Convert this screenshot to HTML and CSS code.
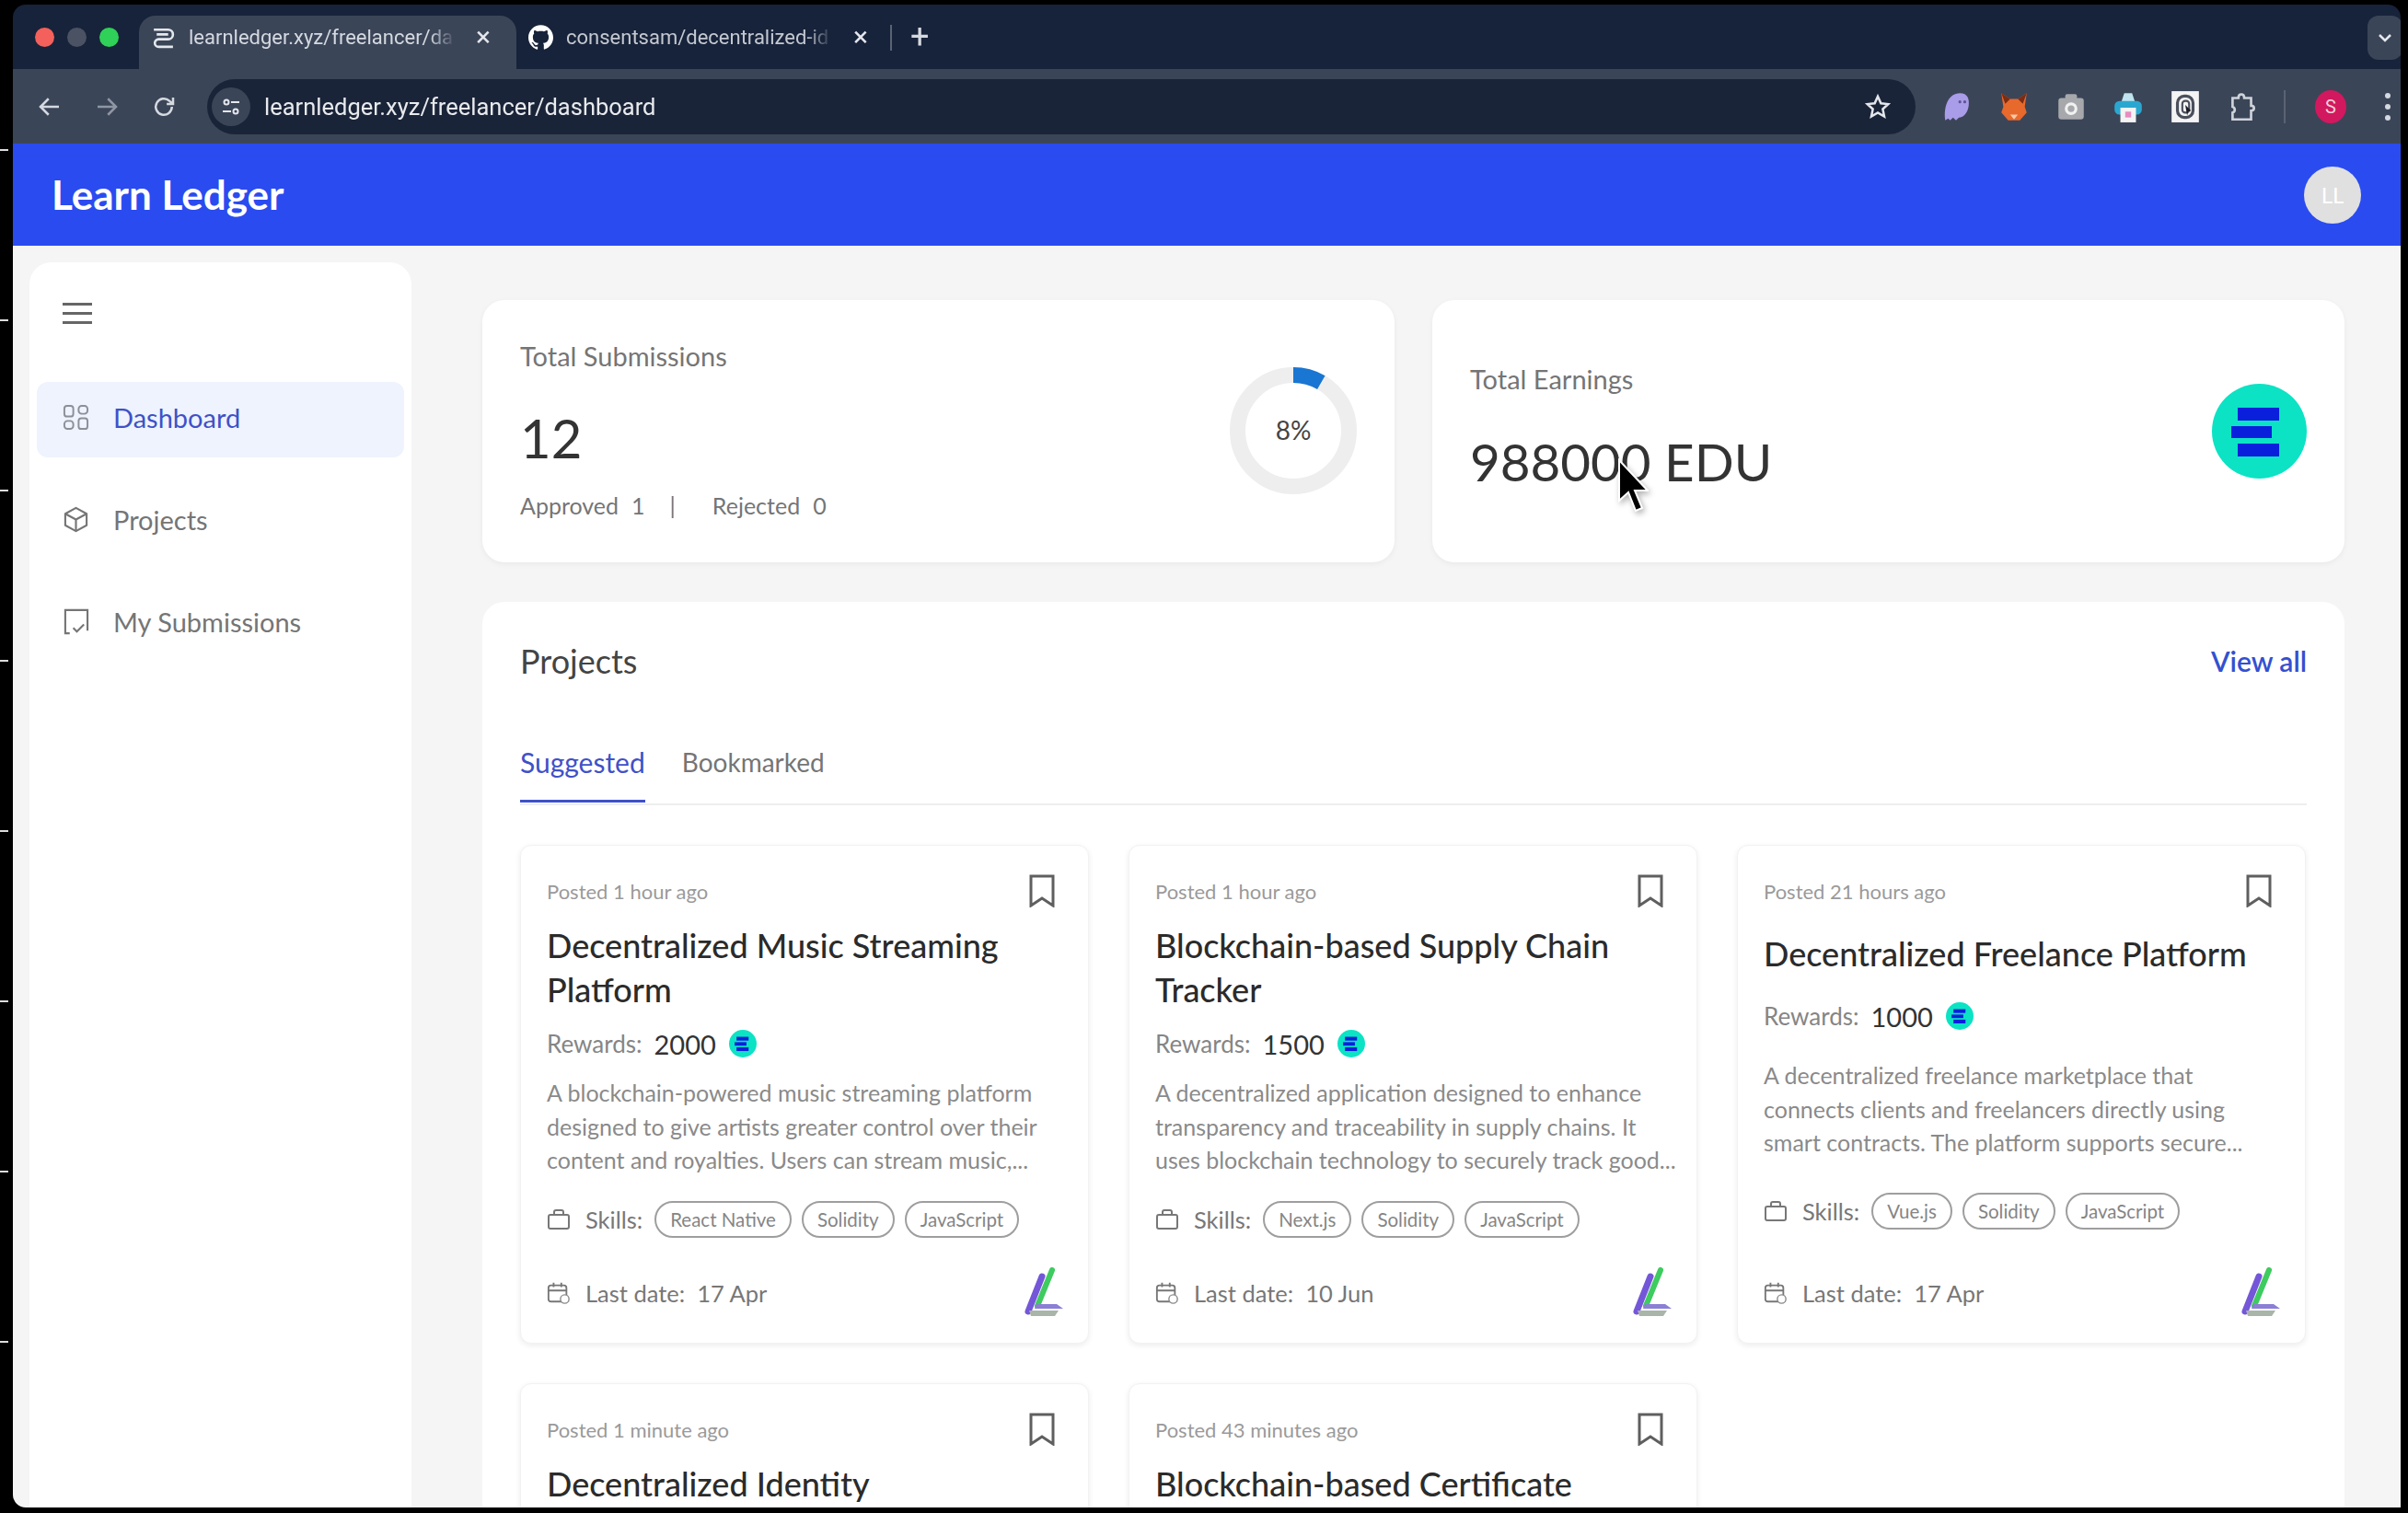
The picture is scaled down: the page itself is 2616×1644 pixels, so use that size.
FILE: index.html
```html
<!DOCTYPE html>
<html lang="en">
<head>
    <meta charset="UTF-8">
    <meta name="viewport" content="width=device-width, initial-scale=1.0">
    <title>Learn Ledger</title>
    <link rel="stylesheet" href="styles.css">
</head>
<body>
    <!-- shared icons -->
    <svg class="icon-defs" aria-hidden="true">
        <symbol id="edu" viewBox="0 0 103 103">
            <circle cx="51.5" cy="51.500" r="51.500" fill="#0be3c4"/>
            <rect x="28" y="26" width="45" height="14" fill="#0a1fdc"/>
            <rect x="21" y="46" width="44" height="13" fill="#0a1fdc"/>
            <rect x="28" y="65" width="45" height="14" fill="#0a1fdc"/>
        </symbol>
        <symbol id="bookmark" viewBox="0 0 30 36">
            <path d="M3 2h24v32l-12-8-12 8z" fill="none" stroke="#5f5f5f" stroke-width="3"/>
        </symbol>
        <symbol id="bag" viewBox="0 0 26 26">
            <rect x="2" y="8" width="22" height="15" rx="2" fill="none" stroke="#777" stroke-width="2"/>
            <path d="M8 8V5a2 2 0 0 1 2-2h6a2 2 0 0 1 2 2v3" fill="none" stroke="#777" stroke-width="2"/>
        </symbol>
        <symbol id="calendar" viewBox="0 0 28 28">
            <rect x="2" y="5" width="21" height="19" rx="3" fill="none" stroke="#777" stroke-width="2"/>
            <path d="M2 11h21M8 2v5M17 2v5" fill="none" stroke="#777" stroke-width="2"/>
            <circle cx="21" cy="21" r="5" fill="#fff" stroke="#888" stroke-width="1.500"/>
        </symbol>
        <symbol id="ll-logo" viewBox="0 0 46 56">
            <path d="M20 10 5 48" stroke="#7457d8" stroke-width="7" stroke-linecap="round" fill="none"/>
            <path d="M31 3 15 42" stroke="#3ecb5f" stroke-width="6" stroke-linecap="round" fill="none"/>
            <path d="M14 40h22l7 5H12z" fill="#8c7fd6"/>
            <path d="M6 47h32l-4 6H8z" fill="#a9b5a8"/>
        </symbol>
    </svg>

    <div class="ticks">
        <i></i><i></i><i></i><i></i><i></i><i></i><i></i><i></i>
    </div>

    <div class="screen">
        <div class="tabstrip">
            <div class="lights"><i class="red"></i><i class="grey"></i><i class="green"></i></div>
            <div class="tab active">
                <svg class="favicon" viewBox="0 0 26 26"><path d="M3 5h15a5 5 0 0 1 0 10H8a4 4 0 0 0 0 8h15M6 10h12" fill="none" stroke="#e4e7ec" stroke-width="2.500"/></svg>
                <span class="tab-title">learnledger.xyz/freelancer/da</span>
                <span class="tab-close">×</span>
            </div>
            <div class="tab">
                <svg class="favicon" viewBox="0 0 24 24"><path fill="#fff" d="M12 .297c-6.630 0-12 5.373-12 12 0 5.303 3.438 9.800 8.205 11.385.600.113.820-.258.820-.577 0-.285-.010-1.040-.015-2.040-3.338.724-4.042-1.610-4.042-1.610C4.422 18.070 3.633 17.700 3.633 17.700c-1.087-.744.084-.729.084-.729 1.205.084 1.838 1.236 1.838 1.236 1.070 1.835 2.809 1.305 3.495.998.108-.776.417-1.305.760-1.605-2.665-.300-5.466-1.332-5.466-5.930 0-1.310.465-2.380 1.235-3.220-.135-.303-.540-1.523.105-3.176 0 0 1.005-.322 3.300 1.230.960-.267 1.980-.399 3-.405 1.020.006 2.040.138 3 .405 2.280-1.552 3.285-1.230 3.285-1.230.645 1.653.240 2.873.120 3.176.765.840 1.230 1.910 1.230 3.220 0 4.610-2.805 5.625-5.475 5.920.420.360.810 1.096.810 2.220 0 1.606-.015 2.896-.015 3.286 0 .315.210.690.825.570C20.565 22.092 24 17.592 24 12.297c0-6.627-5.373-12-12-12"/></svg>
                <span class="tab-title">consentsam/decentralized-id</span>
                <span class="tab-close">×</span>
            </div>
            <span class="tab-sep"></span>
            <span class="tab-new">+</span>
            <span class="tab-menu">
                <svg viewBox="0 0 16 10" width="16" height="10"><path d="M2 2l6 6 6-6" fill="none" stroke="#e4e7ec" stroke-width="2.500"/></svg>
            </span>
        </div>

        <div class="toolbar">
            <svg class="nav-btn" viewBox="0 0 24 24"><path d="M20 12H5M11 5l-7 7 7 7" fill="none" stroke="#d5d9e0" stroke-width="2"/></svg>
            <svg class="nav-btn dim" viewBox="0 0 24 24"><path d="M4 12h15M13 5l7 7-7 7" fill="none" stroke="#8f96a3" stroke-width="2"/></svg>
            <svg class="nav-btn" viewBox="0 0 24 24"><path d="M19 12a7 7 0 1 1-2.200-5.100L20 9.500M20 4v5.500h-5.500" fill="none" stroke="#d5d9e0" stroke-width="2"/></svg>
            <div class="omnibox">
                <span class="site-chip">
                    <svg viewBox="0 0 24 24" width="24" height="24"><g fill="none" stroke="#e4e7ec" stroke-width="2"><circle cx="7" cy="7" r="2.500"/><path d="M12 7h9M3 17h9"/><circle cx="17" cy="17" r="2.500"/></g></svg>
                </span>
                <span class="url">learnledger.xyz/freelancer/dashboard</span>
                <svg class="star" viewBox="0 0 24 24"><path d="M12 3l2.700 6 6.300.700-4.700 4.300 1.300 6.400L12 17.200l-5.600 3.200 1.300-6.400L3 9.700 9.300 9z" fill="none" stroke="#e4e7ec" stroke-width="2"/></svg>
            </div>
            <div class="extensions">
                <svg class="ext" viewBox="0 0 30 34"><path d="M3 31c-2-14 3-28 15-28 8 0 10 6 9 13-1 8-6 12-10 12l-3 3-3-3-3 3-2-2z" fill="#a99ce8"/><circle cx="18" cy="12" r="1.500" fill="#5e5494"/><circle cx="23" cy="12" r="1.500" fill="#5e5494"/></svg>
                <svg class="ext" viewBox="0 0 30 34"><path d="M2 3l9 6h8l9-6-2 14 2 6-7 8H9l-7-8 2-6z" fill="#e8692c"/><path d="M2 3l9 6-5 5zM28 3l-9 6 5 5z" fill="#7c2c12"/><path d="M11 25h8l-4 5z" fill="#f6c9a8"/></svg>
                <svg class="ext" viewBox="0 0 30 34"><rect x="2" y="8" width="26" height="22" rx="3" fill="#a6a8ac"/><rect x="9" y="4" width="12" height="6" rx="2" fill="#a6a8ac"/><circle cx="15" cy="19" r="5" fill="none" stroke="#f1f1f1" stroke-width="3"/></svg>
                <svg class="ext" viewBox="0 0 30 34"><path d="M8 12l3-9h8l3 9z" fill="#bfe3ef"/><rect x="1" y="11" width="28" height="14" rx="5" fill="#2aa7d0"/><rect x="7" y="18" width="16" height="15" fill="#f3f3f3"/><rect x="12" y="22" width="6" height="6" fill="#e88bc0"/></svg>
                <svg class="ext" viewBox="0 0 30 34"><rect x="1" y="1" width="28" height="32" fill="#f4f4f4"/><rect x="7" y="6" width="16" height="22" rx="7" fill="none" stroke="#4a4f5c" stroke-width="3"/><rect x="12" y="11" width="7" height="12" rx="3" fill="none" stroke="#4a4f5c" stroke-width="2"/><path d="M15 15l6 6-3 1-1 4z" fill="#1a1d26"/></svg>
                <svg class="ext" viewBox="0 0 30 34"><path d="M5 8h6c0-5 6-5 6 0h7v8c4 0 4 5 0 5v9H5v-7c3-1 3-5 0-6z" fill="none" stroke="#cfd3da" stroke-width="2.500"/></svg>
                <span class="ext-sep"></span>
                <span class="profile">S</span>
                <span class="dots"><i></i><i></i><i></i></span>
            </div>
        </div>

        <header class="app-header">
            <span class="brand">Learn Ledger</span>
            <span class="user-badge">LL</span>
        </header>

        <div class="app-body">
            <aside class="sidebar">
                <div class="burger"><i></i><i></i><i></i></div>
                <nav class="side-nav">
                    <a class="side-link active">
                        <svg viewBox="0 0 30 30"><g fill="none" stroke="#8a8f98" stroke-width="2"><rect x="2" y="2" width="10" height="12" rx="3"/><rect x="18" y="2" width="10" height="9" rx="3.500"/><rect x="2" y="19" width="10" height="9" rx="3.500"/><rect x="18" y="16" width="10" height="12" rx="3"/></g></svg>
                        Dashboard
                    </a>
                    <a class="side-link">
                        <svg viewBox="0 0 30 30"><g fill="none" stroke="#757575" stroke-width="2.200" stroke-linejoin="round"><path d="M15 2l12 6.500v13L15 28 3 21.500v-13z"/><path d="M3 8.500L15 15l12-6.500M15 15v13"/></g></svg>
                        Projects
                    </a>
                    <a class="side-link">
                        <svg viewBox="0 0 30 30"><path d="M8 28H3V2h25v23M12 22l4 4 8-8" fill="none" stroke="#757575" stroke-width="2.200"/></svg>
                        My Submissions
                    </a>
                </nav>
            </aside>

            <main class="content">
                <section class="stats">
                    <div class="stat-card">
                        <div class="stat-text">
                            <div class="stat-label">Total Submissions</div>
                            <div class="stat-value">12</div>
                            <div class="stat-meta">
                                <span>Approved</span><span class="gap-sm">1</span><span class="gap-md">|</span><span class="gap-lg">Rejected</span><span class="gap-sm">0</span>
                            </div>
                        </div>
                        <div class="donut">
                            <svg viewBox="0 0 138 138">
                                <circle cx="69" cy="69" r="60.500" fill="none" stroke="#eeeeee" stroke-width="17"/>
                                <path d="M69 8.500A60.500 60.500 0 0 1 99.300 16.600" fill="none" stroke="#1976d2" stroke-width="17"/>
                            </svg>
                            <span class="donut-label">8%</span>
                        </div>
                    </div>
                    <div class="stat-card earn">
                        <div class="stat-text">
                            <div class="stat-label">Total Earnings</div>
                            <div class="stat-value wide">988000 EDU</div>
                        </div>
                        <svg class="edu-big"><use href="#edu"/></svg>
                    </div>
                </section>

                <section class="projects">
                    <div class="projects-head">
                        <h2>Projects</h2>
                        <a class="view-all">View all</a>
                    </div>
                    <div class="tabs">
                        <span class="tabs-item on">Suggested</span>
                        <span class="tabs-item">Bookmarked</span>
                    </div>
                    <div class="project-grid">
                        <article class="project-card">
                            <div class="card-top"><span class="posted">Posted 1 hour ago</span><svg class="mark"><use href="#bookmark"/></svg></div>
                            <h3>Decentralized Music Streaming<br>Platform</h3>
                            <div class="rewards"><span>Rewards:</span><b>2000</b><svg class="edu-small"><use href="#edu"/></svg></div>
                            <p class="desc">A blockchain-powered music streaming platform<br>designed to give artists greater control over their<br>content and royalties. Users can stream music,...</p>
                            <div class="skills"><svg class="row-icon"><use href="#bag"/></svg><span class="row-label">Skills:</span><span class="chip">React Native</span><span class="chip">Solidity</span><span class="chip">JavaScript</span></div>
                            <div class="card-foot"><svg class="row-icon"><use href="#calendar"/></svg><span class="row-label">Last date:</span><span class="row-date">17 Apr</span><svg class="ll-logo"><use href="#ll-logo"/></svg></div>
                        </article>
                        <article class="project-card">
                            <div class="card-top"><span class="posted">Posted 1 hour ago</span><svg class="mark"><use href="#bookmark"/></svg></div>
                            <h3>Blockchain-based Supply Chain<br>Tracker</h3>
                            <div class="rewards"><span>Rewards:</span><b>1500</b><svg class="edu-small"><use href="#edu"/></svg></div>
                            <p class="desc">A decentralized application designed to enhance<br>transparency and traceability in supply chains. It<br>uses blockchain technology to securely track good...</p>
                            <div class="skills"><svg class="row-icon"><use href="#bag"/></svg><span class="row-label">Skills:</span><span class="chip">Next.js</span><span class="chip">Solidity</span><span class="chip">JavaScript</span></div>
                            <div class="card-foot"><svg class="row-icon"><use href="#calendar"/></svg><span class="row-label">Last date:</span><span class="row-date">10 Jun</span><svg class="ll-logo"><use href="#ll-logo"/></svg></div>
                        </article>
                        <article class="project-card single">
                            <div class="card-top"><span class="posted">Posted 21 hours ago</span><svg class="mark"><use href="#bookmark"/></svg></div>
                            <h3>Decentralized Freelance Platform</h3>
                            <div class="rewards"><span>Rewards:</span><b>1000</b><svg class="edu-small"><use href="#edu"/></svg></div>
                            <p class="desc">A decentralized freelance marketplace that<br>connects clients and freelancers directly using<br>smart contracts. The platform supports secure...</p>
                            <div class="skills"><svg class="row-icon"><use href="#bag"/></svg><span class="row-label">Skills:</span><span class="chip">Vue.js</span><span class="chip">Solidity</span><span class="chip">JavaScript</span></div>
                            <div class="card-foot"><svg class="row-icon"><use href="#calendar"/></svg><span class="row-label">Last date:</span><span class="row-date">17 Apr</span><svg class="ll-logo"><use href="#ll-logo"/></svg></div>
                        </article>
                        <article class="project-card">
                            <div class="card-top"><span class="posted">Posted 1 minute ago</span><svg class="mark"><use href="#bookmark"/></svg></div>
                            <h3>Decentralized Identity</h3>
                        </article>
                        <article class="project-card">
                            <div class="card-top"><span class="posted">Posted 43 minutes ago</span><svg class="mark"><use href="#bookmark"/></svg></div>
                            <h3>Blockchain-based Certificate</h3>
                        </article>
                    </div>
                </section>
            </main>
        </div>
    </div>

    <!-- mouse pointer caught in the recording -->
    <svg class="pointer" viewBox="0 0 36 60"><path d="M4 2v44l10-9 8 20 7-3-8-19h14z" fill="#000" stroke="#fff" stroke-width="2"/></svg>
</body>
</html>
```

FILE: styles.css
```css
* {
    box-sizing: border-box;
}
body {
    margin: 0;
    width: 2616px;
    height: 1644px;
    background: #000;
    overflow: hidden;
    display: flex;
    font-family: 'Lato', 'Open Sans', sans-serif;
    color: #333;
}
.icon-defs {
    position: absolute;
    width: 0;
    height: 0;
}

/* little marks on the black edge */
.ticks {
    width: 14px;
    flex-shrink: 0;
    padding-top: 162px;
    display: flex;
    flex-direction: column;
    gap: 183px;
}
.ticks i {
    display: block;
    width: 9px;
    height: 2px;
    background: #ddd;
}

.screen {
    width: 2594px;
    height: 1633px;
    margin-top: 5px;
    border-radius: 14px 14px 0 14px;
    overflow: hidden;
    display: flex;
    flex-direction: column;
    filter: blur(0.7px);
}

/* browser chrome */
.tabstrip {
    height: 70px;
    flex-shrink: 0;
    background: #17233a;
    display: flex;
    align-items: flex-end;
    font-family: 'Roboto', 'Liberation Sans', sans-serif;
    position: relative;
}
.lights {
    width: 137px;
    padding: 0 0 24px 24px;
    display: flex;
    gap: 14px;
    flex-shrink: 0;
}
.lights i {
    width: 21px;
    height: 21px;
    border-radius: 50%;
}
.red { background: #f4605b; }
.grey { background: #4a5263; }
.green { background: #2fd158; }
.tab {
    width: 410px;
    height: 58px;
    padding: 0 0 12px 13px;
    border-radius: 18px 18px 0 0;
    display: flex;
    align-items: center;
    color: #c4c8d0;
    font-size: 22px;
    flex-shrink: 0;
}
.tab.active {
    background: #3b4558;
    color: #d5d9e0;
}
.favicon {
    width: 27px;
    height: 27px;
    flex-shrink: 0;
    margin-right: 14px;
}
.tab-title {
    width: 290px;
    white-space: nowrap;
    overflow: hidden;
    -webkit-mask-image: linear-gradient(90deg, #000 90%, transparent);
    mask-image: linear-gradient(90deg, #000 90%, transparent);
}
.tab-close {
    margin-left: 22px;
    font-size: 30px;
    line-height: 1;
    color: #e4e7ec;
}
.tab-sep {
    width: 2px;
    height: 28px;
    background: #5a6373;
    margin: 0 0 20px -4px;
}
.tab-new {
    margin: 0 0 17px 20px;
    font-size: 36px;
    line-height: 1;
    color: #d5d9e0;
}
.tab-menu {
    position: absolute;
    right: -2px;
    top: 12px;
    width: 38px;
    height: 48px;
    border-radius: 12px;
    background: #3b4558;
    display: flex;
    align-items: center;
    justify-content: center;
}
.toolbar {
    height: 81px;
    flex-shrink: 0;
    background: #3b4558;
    display: flex;
    align-items: center;
    padding-left: 25px;
    font-family: 'Roboto', 'Liberation Sans', sans-serif;
}
.nav-btn {
    width: 30px;
    height: 30px;
    margin-right: 32px;
    flex-shrink: 0;
}
.omnibox {
    width: 1856px;
    height: 60px;
    border-radius: 30px;
    background: #1a2438;
    display: flex;
    align-items: center;
    padding: 0 26px 0 5px;
    flex-shrink: 0;
}
.site-chip {
    width: 42px;
    height: 42px;
    border-radius: 50%;
    background: #3b4558;
    display: flex;
    align-items: center;
    justify-content: center;
}
.url {
    margin-left: 15px;
    flex: 1;
    font-size: 25.500px;
    color: #e8eaed;
}
.star {
    width: 30px;
    height: 30px;
}
.extensions {
    display: flex;
    align-items: center;
    margin-left: 29px;
}
.ext {
    width: 32px;
    height: 36px;
    margin-right: 30px;
    flex-shrink: 0;
}
.ext-sep {
    width: 2px;
    height: 36px;
    background: #5a6373;
    margin-left: -1px;
}
.profile {
    width: 34px;
    height: 36px;
    margin-left: 32px;
    border-radius: 50%;
    background: #d2185e;
    color: #f5d0dd;
    font-size: 20px;
    display: flex;
    align-items: center;
    justify-content: center;
    flex-shrink: 0;
}
.dots {
    margin-left: 42px;
    display: flex;
    flex-direction: column;
    gap: 6px;
}
.dots i {
    display: block;
    width: 6px;
    height: 6px;
    border-radius: 50%;
    background: #d5d9e0;
}

/* app */
.app-header {
    height: 111px;
    flex-shrink: 0;
    background: #2a4bf0;
    display: flex;
    align-items: center;
    justify-content: space-between;
    padding: 0 43px 0 42px;
    color: #fff;
}
.brand {
    font-size: 44px;
    font-weight: 700;
    padding-bottom: 2px;
}
.user-badge {
    width: 62px;
    height: 62px;
    border-radius: 50%;
    background: #e0e0e0;
    color: #fff;
    font-size: 24px;
    display: flex;
    align-items: center;
    justify-content: center;
}
.app-body {
    flex: 1;
    min-height: 0;
    background: #f5f5f5;
    display: flex;
    overflow: hidden;
}
.sidebar {
    width: 415px;
    margin: 18px 0 0 18px;
    padding: 0 8px;
    background: #fff;
    border-radius: 24px 24px 0 0;
    flex-shrink: 0;
}
.burger {
    padding: 44px 0 0 28px;
    height: 130px;
    display: flex;
    flex-direction: column;
    gap: 7px;
}
.burger i {
    width: 32px;
    height: 3px;
    background: #666;
}
.side-nav {
    display: flex;
    flex-direction: column;
    gap: 29px;
}
.side-link {
    height: 82px;
    padding: 0 0 5px 28px;
    border-radius: 12px;
    display: flex;
    align-items: center;
    gap: 26px;
    font-size: 29px;
    color: #757575;
}
.side-link svg {
    width: 29px;
    height: 29px;
}
.side-link.active {
    background: #eef3fd;
    color: #3f51c8;
}
.content {
    width: 2023px;
    margin-left: 77px;
    padding-top: 59px;
    flex-shrink: 0;
}
.stats {
    display: flex;
    gap: 41px;
}
.stat-card {
    flex: 1;
    height: 285px;
    padding: 43px 41px 0;
    background: #fff;
    border-radius: 24px;
    box-shadow: 0 2px 6px rgba(0, 0, 0, 0.05);
    display: flex;
    justify-content: space-between;
}
.stat-card.earn {
    padding-top: 68px;
}
.stat-label {
    font-size: 29px;
    line-height: 36px;
    color: #757575;
}
.stat-value {
    margin-top: 36px;
    font-size: 58px;
    line-height: 70px;
    color: #333;
}
.stat-value.wide {
    margin-top: 36px;
    font-size: 56.500px;
}
.stat-meta {
    margin-top: 23px;
    font-size: 25px;
    color: #757575;
    display: flex;
}
.gap-sm { margin-left: 14px; }
.gap-md { margin-left: 27px; }
.gap-lg { margin-left: 40px; }
.donut {
    width: 138px;
    height: 138px;
    margin-top: 30px;
    padding-bottom: 2px;
    position: relative;
    display: flex;
    align-items: center;
    justify-content: center;
}
.donut svg {
    position: absolute;
    inset: 0;
}
.donut-label {
    font-size: 28px;
    color: #444;
}
.edu-big {
    width: 103px;
    height: 103px;
    margin-top: 23px;
}
.projects {
    margin-top: 43px;
    padding: 0 41px;
    background: #fff;
    border-radius: 24px 24px 0 0;
    height: 1200px;
}
.projects-head {
    height: 132px;
    padding-top: 41px;
    display: flex;
    justify-content: space-between;
    align-items: flex-start;
}
.projects-head h2 {
    margin: 0;
    font-size: 36px;
    font-weight: 400;
    line-height: 46px;
    color: #444;
}
.view-all {
    font-size: 30px;
    font-weight: 600;
    line-height: 46px;
    color: #3350d0;
}
.tabs {
    height: 89px;
    border-bottom: 2px solid #eeeeee;
    display: flex;
    gap: 40px;
}
.tabs-item {
    height: 88px;
    line-height: 88px;
    margin-top: -2px;
    font-size: 28px;
    color: #757575;
}
.tabs-item.on {
    font-size: 30px;
    color: #3f51c8;
    border-bottom: 3px solid #3f51c8;
}
.project-grid {
    margin-top: 43px;
    display: grid;
    grid-template-columns: repeat(3, 618px);
    grid-auto-rows: 542px;
    gap: 43px;
}
.project-card {
    padding: 31px 35px 0 28px;
    border-radius: 12px;
    border: 1px solid #f2f2f2;
    box-shadow: 0 2px 6px rgba(0, 0, 0, 0.08);
    background: #fff;
    display: flex;
    flex-direction: column;
}
.card-top {
    height: 36px;
    display: flex;
    justify-content: space-between;
    align-items: center;
}
.posted {
    font-size: 22px;
    color: #9a9a9a;
}
.mark {
    width: 30px;
    height: 36px;
}
.project-card h3 {
    margin: 17px 0 0;
    font-size: 36px;
    font-weight: 500;
    line-height: 48px;
    color: #2b2b2b;
    white-space: nowrap;
}
.project-card.single h3 {
    margin-top: 26px;
}
.rewards {
    margin-top: 15px;
    height: 40px;
    display: flex;
    align-items: center;
    font-size: 26px;
    color: #858585;
}
.single .rewards {
    margin-top: 24px;
}
.rewards b {
    margin-left: 13px;
    font-size: 29px;
    font-weight: 400;
    color: #333;
}
.edu-small {
    width: 30px;
    height: 30px;
    margin-left: 14px;
}
.desc {
    margin: 15px 0 0;
    font-size: 25px;
    line-height: 36.500px;
    color: #8a8a8a;
    white-space: nowrap;
}
.single .desc {
    margin-top: 26px;
}
.skills {
    margin-top: 26px;
    display: flex;
    align-items: center;
}
.single .skills {
    margin-top: 36px;
}
.row-icon {
    width: 26px;
    height: 26px;
    flex-shrink: 0;
    margin-right: 16px;
}
.row-label {
    font-size: 25.500px;
    color: #777;
}
.chip {
    height: 40px;
    padding: 0 15px;
    margin-left: 11px;
    border: 2px solid #9e9e9e;
    border-radius: 20px;
    font-size: 20.500px;
    color: #858585;
    display: flex;
    align-items: center;
}
.row-label + .chip {
    margin-left: 13px;
}
.card-foot {
    margin-top: auto;
    margin-bottom: 26px;
    height: 56px;
    display: flex;
    align-items: center;
}
.row-date {
    margin-left: 13px;
    font-size: 25.500px;
    color: #777;
}
.ll-logo {
    width: 46px;
    height: 56px;
    margin-left: auto;
    margin-right: -11px;
}
.pointer {
    position: absolute;
    left: 1755px;
    top: 498px;
    width: 36px;
    height: 60px;
    filter: drop-shadow(2px 3px 3px rgba(0, 0, 0, 0.3));
}
```
